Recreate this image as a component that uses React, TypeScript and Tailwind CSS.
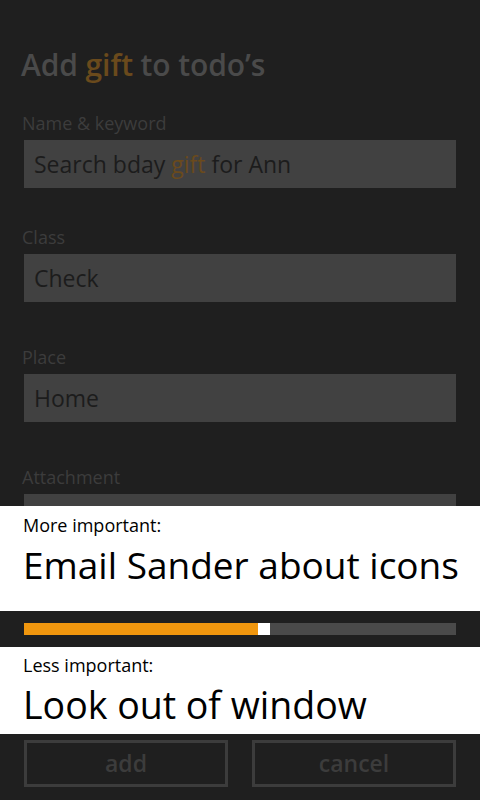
import React from 'react'

const font = { fontFamily: '"Open Sans", "Noto Sans", sans-serif' }

function Field({ label, value, className }: { label: string; value?: React.ReactNode; className?: string }) {
  return (
    <div className={`flex flex-col ${className ?? ''}`}>
      <div className="text-[18px] leading-[26px] text-[#3c3c3c] pl-[22px]">{label}</div>
      <div className="mx-[24px] mt-[4px] h-[48px] bg-[#414141] flex items-center px-[10px] text-[23px] text-[#1c1c1c]">
        {value}
      </div>
    </div>
  )
}

export default function App() {
  return (
    <div className="w-[480px] h-[800px] bg-[#1f1f1f] flex flex-col overflow-hidden" style={font}>
      <div className="h-[506px] overflow-hidden flex flex-col">
        <h1 className="pl-[21px] pt-[44px] text-[30px] leading-[42px] font-semibold tracking-[-0.1px] text-[#4a4a4a]">
          Add <span className="text-[#6a4a1c]">gift</span> to todo’s
        </h1>
        <div className="mt-[24px] flex flex-col">
          <Field
            label="Name & keyword"
            value={
              <span>
                Search bday <span className="text-[#6a4a1c]">gift</span> for Ann
              </span>
            }
          />
          <Field label="Class" value="Check" className="mt-[36px]" />
          <Field label="Place" value="Home" className="mt-[42px]" />
          <Field label="Attachment" className="mt-[42px]" />
        </div>
      </div>

      <div className="bg-white h-[105px] pl-[23px] pt-[6px]">
        <div className="text-[18px] leading-[26px] text-black">More important:</div>
        <div className="text-[37px] leading-[54px] text-black">Email Sander about icons</div>
      </div>

      <div className="h-[36px] flex items-center px-[24px]">
        <div className="flex h-[12px] w-full">
          <div className="w-[234px] bg-[#f0960e]" />
          <div className="w-[12px] bg-white" />
          <div className="flex-1 bg-[#4a4a4a]" />
        </div>
      </div>

      <div className="bg-white h-[87px] pl-[23px] pt-[5px]">
        <div className="text-[18px] leading-[26px] text-black">Less important:</div>
        <div className="text-[37.5px] leading-[54px] text-black">Look out of window</div>
      </div>

      <div className="flex gap-[24px] px-[24px] pt-[6px]">
        <button className="flex-1 h-[47px] border-[3px] border-[#3c3c3c] text-[#3c3c3c] text-[23px] font-semibold leading-none">
          add
        </button>
        <button className="flex-1 h-[47px] border-[3px] border-[#3c3c3c] text-[#3c3c3c] text-[23px] font-semibold leading-none">
          cancel
        </button>
      </div>
    </div>
  )
}
